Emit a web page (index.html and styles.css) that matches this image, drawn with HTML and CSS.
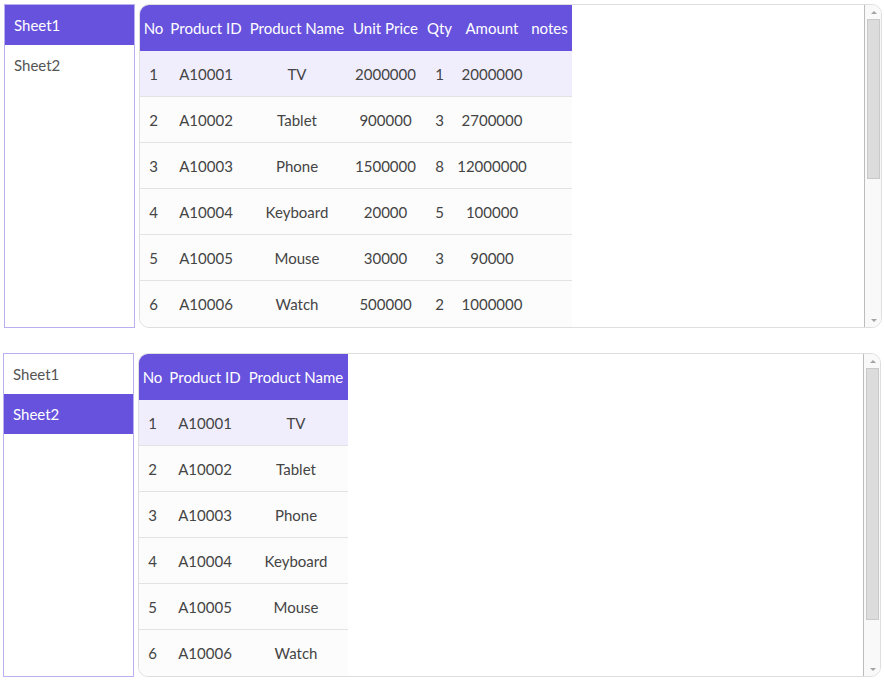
FILE: index.html
```html
<!DOCTYPE html>
<html>
<head>
<meta charset="utf-8">
<link rel="stylesheet" href="styles.css">
</head>
<body>
<div class="panel panel-first">
  <div class="sidebar">
    <div class="tab active">Sheet1</div>
    <div class="tab">Sheet2</div>
  </div>
  <div class="sheet">
    <div class="sheet-body">
      <table class="grid">
        <thead>
          <tr>
            <th class="c-no">No</th><th class="c-id">Product ID</th><th class="c-name">Product Name</th><th class="c-price">Unit Price</th><th class="c-qty">Qty</th><th class="c-amt">Amount</th><th class="c-notes">notes</th>
          </tr>
        </thead>
        <tbody>
          <tr class="hl"><td>1</td><td>A10001</td><td>TV</td><td>2000000</td><td>1</td><td>2000000</td><td></td></tr>
          <tr><td>2</td><td>A10002</td><td>Tablet</td><td>900000</td><td>3</td><td>2700000</td><td></td></tr>
          <tr><td>3</td><td>A10003</td><td>Phone</td><td>1500000</td><td>8</td><td>12000000</td><td></td></tr>
          <tr><td>4</td><td>A10004</td><td>Keyboard</td><td>20000</td><td>5</td><td>100000</td><td></td></tr>
          <tr><td>5</td><td>A10005</td><td>Mouse</td><td>30000</td><td>3</td><td>90000</td><td></td></tr>
          <tr class="last"><td>6</td><td>A10006</td><td>Watch</td><td>500000</td><td>2</td><td>1000000</td><td></td></tr>
        </tbody>
      </table>
    </div>
    <div class="vscroll">
      <div class="vbtn"><span class="arrow-up"></span></div>
      <div class="vtrack"><div class="vthumb thumb-first"></div></div>
      <div class="vbtn"><span class="arrow-down"></span></div>
    </div>
  </div>
</div>

<div class="panel panel-second">
  <div class="sidebar">
    <div class="tab">Sheet1</div>
    <div class="tab active">Sheet2</div>
  </div>
  <div class="sheet">
    <div class="sheet-body">
      <table class="grid">
        <thead>
          <tr>
            <th class="c-no">No</th><th class="c-id">Product ID</th><th class="c-name">Product Name</th>
          </tr>
        </thead>
        <tbody>
          <tr class="hl"><td>1</td><td>A10001</td><td>TV</td></tr>
          <tr><td>2</td><td>A10002</td><td>Tablet</td></tr>
          <tr><td>3</td><td>A10003</td><td>Phone</td></tr>
          <tr><td>4</td><td>A10004</td><td>Keyboard</td></tr>
          <tr><td>5</td><td>A10005</td><td>Mouse</td></tr>
          <tr class="last"><td>6</td><td>A10006</td><td>Watch</td></tr>
        </tbody>
      </table>
    </div>
    <div class="vscroll">
      <div class="vbtn"><span class="arrow-up"></span></div>
      <div class="vtrack"><div class="vthumb thumb-second"></div></div>
      <div class="vbtn"><span class="arrow-down"></span></div>
    </div>
  </div>
</div>
</body>
</html>
```

FILE: styles.css
```css
html, body {
  margin: 0;
  padding: 0;
  background: #ffffff;
}

body {
  font-family: "Lato", "Noto Sans", sans-serif;
  font-size: 15px;
  color: #444444;
  padding-top: 4px;
}

.panel {
  display: flex;
  gap: 4px;
  height: 324px;
  width: 878px;
}

.panel-first {
  margin-left: 4px;
}

.panel-second {
  margin-left: 3px;
  margin-top: 25px;
}

.sidebar {
  width: 129px;
  flex: none;
  border: 1px solid #b9b0f1;
  background: #ffffff;
  display: flex;
  flex-direction: column;
}

.tab {
  height: 40px;
  line-height: 40px;
  padding-left: 9px;
  color: #555555;
}

.tab.active {
  background: #6752dd;
  color: #ffffff;
}

.sheet {
  flex: 1;
  display: flex;
  border: 1px solid #dedede;
  border-radius: 10px;
  overflow: hidden;
  background: #ffffff;
}

.sheet-body {
  flex: 1;
  overflow: hidden;
}

.vscroll {
  width: 16px;
  flex: none;
  border-left: 1px solid #bcbcbc;
  background: #f9f9f9;
  display: flex;
  flex-direction: column;
}

.vbtn {
  height: 14px;
  flex: none;
  display: flex;
  align-items: center;
  justify-content: center;
}

.arrow-up {
  width: 0;
  height: 0;
  border-left: 3px solid transparent;
  border-right: 3px solid transparent;
  border-bottom: 3px solid #a3a3a3;
  margin-left: 1px;
}

.arrow-down {
  width: 0;
  height: 0;
  border-left: 3px solid transparent;
  border-right: 3px solid transparent;
  border-top: 3px solid #a3a3a3;
  margin-left: 1px;
}

.vtrack {
  flex: 1;
  padding: 0 1px 0 2px;
}

.vthumb {
  background: #dcdcdc;
  border: 1px solid #c9c9c9;
  box-sizing: border-box;
}

.thumb-first {
  height: 160px;
}

.thumb-second {
  height: 252px;
}

.grid {
  border-collapse: separate;
  border-spacing: 0;
  table-layout: fixed;
}

.grid th {
  height: 46px;
  padding: 0;
  background: #6752dd;
  color: #ffffff;
  font-weight: normal;
  text-align: center;
  white-space: nowrap;
}

.grid td {
  height: 45px;
  padding: 0;
  text-align: center;
  white-space: nowrap;
  background: #fcfcfc;
  border-bottom: 1px solid #e3e3e3;
  color: #444444;
}

.grid tr.last td {
  border-bottom: none;
  height: 46px;
}

.grid tr.hl td {
  background: #f0eefd;
}

.c-no { width: 27px; }
.c-id { width: 78px; }
.c-name { width: 104px; }
.c-price { width: 73px; }
.c-qty { width: 35px; }
.c-amt { width: 70px; }
.c-notes { width: 45px; }
```
